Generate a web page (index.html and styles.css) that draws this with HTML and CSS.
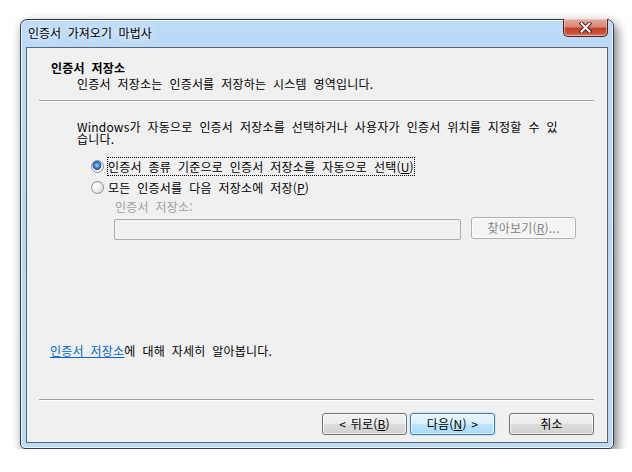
FILE: index.html
```html
<!DOCTYPE html>
<html lang="ko">
<head>
<meta charset="utf-8">
<title>인증서 가져오기 마법사</title>
<link rel="stylesheet" href="styles.css">
</head>
<body>
<div class="window">
  <div class="titlebar">
    <span class="title">인증서 가져오기 마법사</span>
    <div class="close">
      <svg width="13" height="11" viewBox="0 0 13 11"><path d="M2.5 1.5 L10.5 9.5 M10.5 1.5 L2.5 9.5" stroke="#4a2020" stroke-width="4" stroke-linecap="square"/><path d="M2.5 1.5 L10.5 9.5 M10.5 1.5 L2.5 9.5" stroke="#ffffff" stroke-width="2" stroke-linecap="square"/></svg>
    </div>
  </div>
  <div class="client">
    <div class="header">
      <div class="h-title">인증서 저장소</div>
      <div class="h-sub">인증서 저장소는 인증서를 저장하는 시스템 영역입니다.</div>
    </div>
    <div class="sep"></div>
    <div class="content">
      <p class="desc">Windows가 자동으로 인증서 저장소를 선택하거나 사용자가 인증서 위치를 지정할 수 있<br>습니다.</p>
      <div class="radio-row first">
        <span class="radio checked"></span>
        <span class="focus">인증서 종류 기준으로 인증서 저장소를 자동으로 선택(<u>U</u>)</span>
      </div>
      <div class="radio-row second">
        <span class="radio"></span>
        <span>모든 인증서를 다음 저장소에 저장(<u>P</u>)</span>
      </div>
      <div class="store-label">인증서 저장소:</div>
      <div class="store-row">
        <div class="input"></div>
        <div class="btn disabled">찾아보기(<u>R</u>)...</div>
      </div>
      <div class="learn"><span class="link">인증서 저장소</span>에 대해 자세히 알아봅니다.</div>
    </div>
    <div class="sep"></div>
    <div class="footer">
      <div class="btn back">&lt; 뒤로(<u>B</u>)</div>
      <div class="btn next">다음(<u>N</u>) &gt;</div>
      <div class="btn cancel">취소</div>
    </div>
  </div>
</div>
</body>
</html>
```

FILE: styles.css
```css
html, body {
  margin: 0;
  padding: 0;
  background: #ffffff;
}
body {
  padding: 19px 0 0 20px;
  font-family: "Noto Sans CJK KR", "Noto Sans", sans-serif;
  font-size: 12px;
  word-spacing: 3.3px;
  color: #000;
}
.window {
  position: relative;
  width: 582px;
  height: 396px;
  padding: 27px 5px 5px 5px;
  border: 1px solid #2f3b49;
  border-radius: 7px 7px 5px 5px;
  background: linear-gradient(to bottom, #bcdaf8 0%, #bad8f6 50%, #bcd9f6 100%);
  box-shadow: inset 0 0 0 1px rgba(255,255,255,0.75), 3px 5px 12px rgba(0,0,0,0.55);
  display: flex;
  flex-direction: column;
}
.titlebar {
  position: absolute;
  left: 0;
  top: 0;
  right: 0;
  height: 27px;
}
.title {
  position: absolute;
  left: 7px;
  top: 5px;
  line-height: 16px;
  color: #000;
  text-shadow: 0 0 6px rgba(255,255,255,0.9), 0 0 12px rgba(255,255,255,0.8);
}
.close {
  position: absolute;
  right: 5px;
  top: -1px;
  width: 43px;
  height: 17px;
  border: 1px solid #4e2420;
  border-top: none;
  border-radius: 0 0 5px 5px;
  background: linear-gradient(to bottom, #e8a898 0%, #d98a76 45%, #c4412a 55%, #c9553d 85%, #d98a70 100%);
  box-shadow: inset 0 0 0 1px rgba(255,220,210,0.5);
  display: flex;
  align-items: center;
  justify-content: center;
}
.client {
  flex: 1;
  border: 1px solid #56677a;
  background: #f0f0f0;
  display: flex;
  flex-direction: column;
  letter-spacing: 0.2px;
}
.header {
  padding: 12px 0 0 24px;
  line-height: 16px;
}
.h-title {
  font-weight: bold;
}
.h-sub {
  padding-left: 26px;
}
.sep {
  margin: 8px 13px 0 12px;
  border-top: 1px solid #a0a0a0;
  border-bottom: 1px solid #ffffff;
}
.content {
  flex: 1;
  display: flex;
  flex-direction: column;
}
.desc {
  margin: 19px 0 0 50px;
  line-height: 12px;
}
.radio-row {
  display: flex;
  align-items: center;
  height: 16px;
  margin-left: 64px;
  gap: 4px;
}
.radio-row.first { margin-top: 13px; }
.radio-row.second { margin-top: 5px; }
.radio {
  width: 11px;
  height: 11px;
  border: 1px solid #8e8f8f;
  border-radius: 50%;
  background: radial-gradient(circle at 35% 35%, #ffffff 0%, #e8e8e8 60%, #d0d0d0 100%);
  flex: none;
}
.radio.checked {
  background: radial-gradient(circle at 45% 40%, #9fd0ff 0%, #3b82d0 30%, #1b4f8c 48%, #ececec 52%, #ffffff 100%);
}
.focus {
  outline: 1px dotted #000;
  outline-offset: 0;
}
.store-label {
  margin: 4px 0 0 88px;
  line-height: 16px;
  color: #a0a0a0;
}
.store-row {
  display: flex;
  align-items: flex-start;
  margin: 2px 0 0 87px;
  gap: 10px;
}
.input {
  width: 345px;
  height: 19px;
  margin-top: 2px;
  border: 1px solid #acacac;
  border-radius: 2px;
  background: #f0f0f0;
}
.btn {
  box-sizing: border-box;
  height: 22px;
  border: 1px solid #707070;
  border-radius: 3px;
  background: linear-gradient(to bottom, #f2f2f2 0%, #ebebeb 50%, #dddddd 51%, #cfcfcf 100%);
  box-shadow: inset 0 0 0 1px rgba(255,255,255,0.7);
  display: flex;
  align-items: center;
  justify-content: center;
  line-height: 16px;
  word-spacing: 1px;
}
.btn.disabled {
  width: 105px;
  border-color: #adb2b5;
  background: #f4f4f4;
  color: #838383;
}
.learn {
  margin: auto 0 32px 23px;
  line-height: 16px;
}
.link {
  color: #0066cc;
  text-decoration: underline;
}
.footer {
  display: flex;
  justify-content: flex-end;
  padding: 12px 13px 7px 0;
}
.back, .next, .cancel { width: 85px; }
.next {
  margin-left: 3px;
  border-color: #3c7fb1;
  background: linear-gradient(to bottom, #eaf6fd 0%, #d9f0fc 50%, #bee6fd 51%, #a7d9f5 100%);
  box-shadow: inset 0 0 0 1px rgba(255,255,255,0.6), 0 0 2px #8fc6ea;
}
.cancel { margin-left: 14px; }
```
